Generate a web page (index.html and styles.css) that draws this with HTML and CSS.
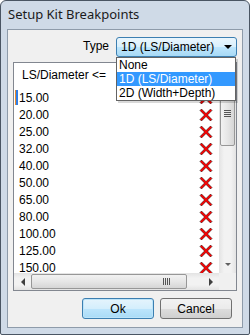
FILE: index.html
```html
<!DOCTYPE html>
<html lang="en">
<head>
<meta charset="UTF-8">
<title>Setup Kit Breakpoints</title>
<link rel="stylesheet" href="styles.css">
</head>
<body>
<div class="window">
  <div class="titlebar">Setup Kit Breakpoints</div>

  <div class="client">
    <div class="type-row">
      <span class="label">Type</span>
      <div class="combo">
        <span class="combo-text">1D (LS/Diameter)</span>
        <span class="combo-arrow"></span>
        <div class="popup">
          <div class="popup-item">None</div>
          <div class="popup-item selected">1D (LS/Diameter)</div>
          <div class="popup-item">2D (Width+Depth)</div>
        </div>
      </div>
    </div>

    <div class="listbox">
      <div class="grid">
        <div class="grid-header">LS/Diameter &lt;=</div>
        <div class="row editing"><span class="caret"></span><span class="cell">15.00</span><svg class="del" viewBox="0 0 14 14"><path d="M1 2.5 L2.5 1 L7 5.5 L11.5 1 L13 2.5 L8.5 7 L13 11.5 L11.5 13 L7 8.5 L2.5 13 L1 11.5 L5.5 7 Z"/></svg></div>
        <div class="row"><span class="cell">20.00</span><svg class="del" viewBox="0 0 14 14"><path d="M1 2.5 L2.5 1 L7 5.5 L11.5 1 L13 2.5 L8.5 7 L13 11.5 L11.5 13 L7 8.5 L2.5 13 L1 11.5 L5.5 7 Z"/></svg></div>
        <div class="row"><span class="cell">25.00</span><svg class="del" viewBox="0 0 14 14"><path d="M1 2.5 L2.5 1 L7 5.5 L11.5 1 L13 2.5 L8.5 7 L13 11.5 L11.5 13 L7 8.5 L2.5 13 L1 11.5 L5.5 7 Z"/></svg></div>
        <div class="row"><span class="cell">32.00</span><svg class="del" viewBox="0 0 14 14"><path d="M1 2.5 L2.5 1 L7 5.5 L11.5 1 L13 2.5 L8.5 7 L13 11.5 L11.5 13 L7 8.5 L2.5 13 L1 11.5 L5.5 7 Z"/></svg></div>
        <div class="row"><span class="cell">40.00</span><svg class="del" viewBox="0 0 14 14"><path d="M1 2.5 L2.5 1 L7 5.5 L11.5 1 L13 2.5 L8.5 7 L13 11.5 L11.5 13 L7 8.5 L2.5 13 L1 11.5 L5.5 7 Z"/></svg></div>
        <div class="row"><span class="cell">50.00</span><svg class="del" viewBox="0 0 14 14"><path d="M1 2.5 L2.5 1 L7 5.5 L11.5 1 L13 2.5 L8.5 7 L13 11.5 L11.5 13 L7 8.5 L2.5 13 L1 11.5 L5.5 7 Z"/></svg></div>
        <div class="row"><span class="cell">65.00</span><svg class="del" viewBox="0 0 14 14"><path d="M1 2.5 L2.5 1 L7 5.5 L11.5 1 L13 2.5 L8.5 7 L13 11.5 L11.5 13 L7 8.5 L2.5 13 L1 11.5 L5.5 7 Z"/></svg></div>
        <div class="row"><span class="cell">80.00</span><svg class="del" viewBox="0 0 14 14"><path d="M1 2.5 L2.5 1 L7 5.5 L11.5 1 L13 2.5 L8.5 7 L13 11.5 L11.5 13 L7 8.5 L2.5 13 L1 11.5 L5.5 7 Z"/></svg></div>
        <div class="row"><span class="cell">100.00</span><svg class="del" viewBox="0 0 14 14"><path d="M1 2.5 L2.5 1 L7 5.5 L11.5 1 L13 2.5 L8.5 7 L13 11.5 L11.5 13 L7 8.5 L2.5 13 L1 11.5 L5.5 7 Z"/></svg></div>
        <div class="row"><span class="cell">125.00</span><svg class="del" viewBox="0 0 14 14"><path d="M1 2.5 L2.5 1 L7 5.5 L11.5 1 L13 2.5 L8.5 7 L13 11.5 L11.5 13 L7 8.5 L2.5 13 L1 11.5 L5.5 7 Z"/></svg></div>
        <div class="row"><span class="cell">150.00</span><svg class="del" viewBox="0 0 14 14"><path d="M1 2.5 L2.5 1 L7 5.5 L11.5 1 L13 2.5 L8.5 7 L13 11.5 L11.5 13 L7 8.5 L2.5 13 L1 11.5 L5.5 7 Z"/></svg></div>
      </div>

      <div class="vscroll">
        <div class="arrow up"><span class="tri-up"></span></div>
        <div class="vthumb"><span class="grip-h"></span></div>
        <div class="track"></div>
        <div class="arrow down"><span class="tri-down"></span></div>
      </div>

      <div class="hscroll">
        <div class="arrow left"><span class="tri-left"></span></div>
        <div class="hthumb"><span class="grip-v"></span></div>
        <div class="track"></div>
        <div class="arrow right"><span class="tri-right"></span></div>
      </div>

      <div class="corner"></div>
    </div>

    <div class="buttons">
      <button class="btn default">Ok</button>
      <button class="btn">Cancel</button>
    </div>
  </div>
</div>
</body>
</html>
```

FILE: styles.css
```css
body {
  margin: 0;
  background: #fff;
}
.window {
  width: 250px;
  height: 335px;
  box-sizing: border-box;
  border: 1px solid #4a5563;
  border-radius: 6px 6px 2px 2px;
  background: #cfdae7;
  padding: 0 6px 6px 6px;
  display: flex;
  flex-direction: column;
}
.titlebar {
  height: 28px;
  line-height: 27px;
  padding-left: 1px;
  font-family: "Noto Sans", sans-serif;
  font-size: 13px;
  color: #1b1b1b;
}
.client {
  flex: 1;
  border: 1px solid #8e9baa;
  background: #f0f0f0;
  padding: 7px 5px 0 5px;
  display: flex;
  flex-direction: column;
  font-family: "Liberation Sans", Arial, sans-serif;
  font-size: 11px;
  color: #000;
}
.type-row {
  display: flex;
  justify-content: flex-end;
  align-items: center;
  gap: 7px;
  height: 20px;
}
.label {
  font-size: 12px;
  padding-bottom: 2px;
}
.combo {
  position: relative;
  width: 121px;
  height: 20px;
  box-sizing: border-box;
  border: 1px solid #3c7fb1;
  border-radius: 3px;
  background: linear-gradient(#eaf6fd 0%, #d9f0fc 50%, #bee6fd 51%, #a7d9f5 100%);
  display: flex;
  align-items: center;
  padding-left: 4px;
  font-size: 12px;
}
.combo-text {
  flex: 1;
}
.combo-arrow {
  width: 0;
  height: 0;
  border-left: 4px solid transparent;
  border-right: 4px solid transparent;
  border-top: 4px solid #000;
  margin-right: 4px;
}
.popup {
  position: absolute;
  left: -1px;
  top: 19px;
  width: 120px;
  box-sizing: border-box;
  border: 1px solid #646464;
  background: #fff;
  padding: 0;
  box-shadow: 2px 2px 0 rgba(0,0,0,0.15);
  z-index: 2;
}
.popup-item {
  height: 14px;
  line-height: 14px;
  padding-left: 2px;
  font-size: 12px;
}
.popup-item.selected {
  background: #3399ff;
  color: #fff;
}
.listbox {
  margin-top: 5px;
  height: 229px;
  box-sizing: border-box;
  border: 1px solid #828790;
  background: #fff;
  display: grid;
  grid-template-columns: 1fr 17px;
  grid-template-rows: 1fr 17px;
}
.grid {
  overflow: hidden;
}
.grid-header {
  height: 26px;
  line-height: 25px;
  padding-left: 8px;
  font-size: 12px;
}
.row {
  height: 17px;
  display: flex;
  align-items: center;
  padding-left: 5px;
  padding-right: 6px;
  font-size: 12px;
}
.row.editing {
  padding-left: 2px;
}
.caret {
  width: 2px;
  height: 15px;
  border-left: 1px solid #e98a2c;
  background: #2f7ee6;
  margin-right: 1px;
  margin-left: -1px;
}
.cell {
  flex: 1;
}
.del {
  width: 14px;
  height: 14px;
  fill: #ff0000;
  stroke: #000;
  stroke-width: 0.5;
}
.vscroll {
  display: flex;
  flex-direction: column;
  background: linear-gradient(90deg, #e3e3e3, #f2f2f2 30%, #f2f2f2 70%, #e3e3e3);
}
.hscroll {
  display: flex;
  background: linear-gradient(#e3e3e3, #f2f2f2 30%, #f2f2f2 70%, #e3e3e3);
}
.corner {
  background: #f0f0f0;
}
.arrow {
  width: 17px;
  height: 17px;
  display: flex;
  align-items: center;
  justify-content: center;
  flex-shrink: 0;
}
.track {
  flex: 1;
}
.tri-up, .tri-down, .tri-left, .tri-right {
  width: 0;
  height: 0;
}
.tri-up {
  border-left: 3px solid transparent;
  border-right: 3px solid transparent;
  border-bottom: 3px solid #606060;
}
.tri-down {
  border-left: 3px solid transparent;
  border-right: 3px solid transparent;
  border-top: 3px solid #606060;
}
.tri-left {
  border-top: 4px solid transparent;
  border-bottom: 4px solid transparent;
  border-right: 4px solid #404040;
}
.tri-right {
  border-top: 4px solid transparent;
  border-bottom: 4px solid transparent;
  border-left: 4px solid #404040;
}
.vthumb {
  height: 66px;
  margin: 0 1px;
  box-sizing: border-box;
  border: 1px solid #979797;
  border-radius: 2px;
  background: linear-gradient(90deg, #f2f2f2, #e6e6e6 50%, #d6d6d6);
  display: flex;
  align-items: center;
  justify-content: center;
}
.hthumb {
  width: 156px;
  margin: 1px 0;
  box-sizing: border-box;
  border: 1px solid #979797;
  border-radius: 2px;
  background: linear-gradient(#f2f2f2, #e6e6e6 50%, #d6d6d6);
  display: flex;
  align-items: center;
  justify-content: flex-end;
  padding-right: 16px;
}
.grip-h {
  width: 7px;
  height: 7px;
  background: repeating-linear-gradient(#555 0 1px, transparent 1px 2px);
}
.grip-v {
  width: 7px;
  height: 7px;
  background: repeating-linear-gradient(90deg, #555 0 1px, transparent 1px 2px);
}
.buttons {
  display: flex;
  justify-content: flex-end;
  gap: 6px;
  margin-top: 7px;
  padding-right: 5px;
}
.btn {
  width: 72px;
  height: 21px;
  box-sizing: border-box;
  border: 1px solid #707070;
  border-radius: 3px;
  background: linear-gradient(#f2f2f2 0%, #ebebeb 50%, #dddddd 51%, #cfcfcf 100%);
  font-family: "Liberation Sans", Arial, sans-serif;
  font-size: 12px;
  color: #000;
  padding: 0;
}
.btn.default {
  border-color: #3c7fb1;
  background: linear-gradient(#e5f4fc 0%, #d4eefc 50%, #bde5fc 51%, #a9dbf6 100%);
  box-shadow: inset 0 0 0 1px #bde4f9;
}
```
